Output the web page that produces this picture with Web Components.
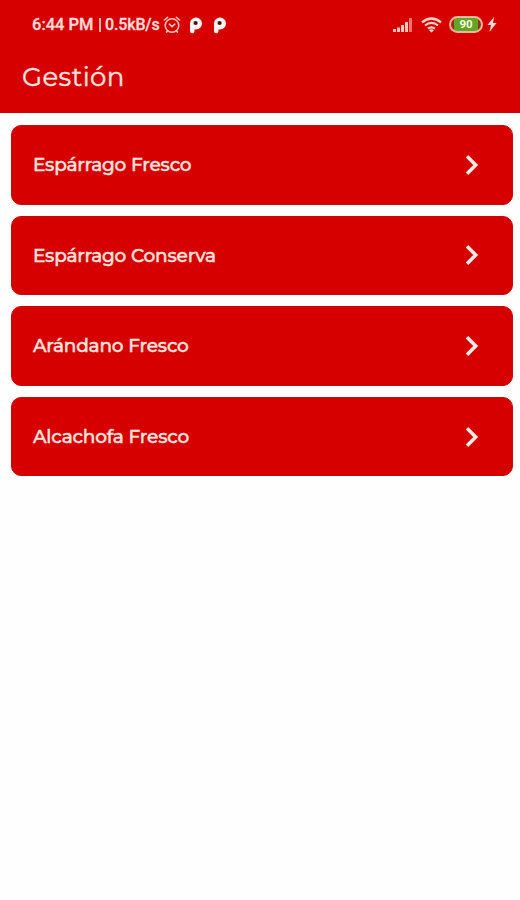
<!DOCTYPE html>
<html lang="es">
<head>
<meta charset="utf-8">
<title>Gestión</title>
<style>
  body {
    margin: 0;
    background: #fefefe;
    font-family: Montserrat, Inter, sans-serif;
  }
</style>
</head>
<body>
<app-screen>
  <status-bar slot="top" time="6:44 PM" speed="0.5kB/s" battery="90"></status-bar>
  <app-header slot="top">Gestión</app-header>
  <menu-item>Espárrago Fresco</menu-item>
  <menu-item>Espárrago Conserva</menu-item>
  <menu-item>Arándano Fresco</menu-item>
  <menu-item>Alcachofa Fresco</menu-item>
</app-screen>

<script>
class AppScreen extends HTMLElement {
  constructor() {
    super();

    this._shadowRoot = this.attachShadow({ mode: 'open' });
    this._shadowRoot.innerHTML = `
      <style>
        :host {
          display: block;
          min-height: 900px;
        }

        header {
          height: 113px;
          background: #d60000;
          color: #ffe3df;
        }

        main {
          display: grid;
          grid-auto-rows: 79.6px;
          gap: 11px;
          padding: 12px 7px 12px 11px;
        }
      </style>
      <header><slot name="top"></slot></header>
      <main><slot></slot></main>
    `;
  }
}

class StatusBar extends HTMLElement {
  constructor() {
    super();

    this._shadowRoot = this.attachShadow({ mode: 'open' });
    this._shadowRoot.innerHTML = `
      <style>
        :host {
          display: flex;
          align-items: center;
          justify-content: space-between;
          box-sizing: border-box;
          height: 48px;
          padding: 1px 23px 0 32px;
          font: 500 16.5px/20px Roboto, sans-serif;
          color: #ffdcd7;
        }

        div {
          display: flex;
          align-items: center;
        }

        svg {
          display: block;
          flex: none;
        }

        span {
          padding-top: 1px;
          -webkit-text-stroke: 0.3px;
        }

        #time {
          width: 66px;
          white-space: nowrap;
        }

        #speed {
          width: 58px;
          font-size: 16px;
          letter-spacing: -0.15px;
          white-space: nowrap;
        }

        .bar {
          width: 1.5px;
          height: 14px;
          margin: 0 4.5px 0 1px;
          padding: 0;
          background: #ffb5ad;
        }

        .alarm {
          margin-right: 8px;
        }

        .app + .app {
          margin-left: 10px;
        }

        .signal {
          margin-right: 8px;
        }

        .wifi {
          margin-right: 7px;
        }

        #battery {
          box-sizing: border-box;
          justify-content: center;
          width: 34px;
          height: 17px;
          margin-right: 4px;
          border: 2px solid #f5b49b;
          border-radius: 9px;
          background: linear-gradient(90deg, #a32a10 3px, #62a525 3px 27px, #8c3413 27px);
          color: #f5ffe5;
          font-size: 11.5px;
          font-weight: 700;
          line-height: 13px;
        }
      </style>
      <div>
        <span id="time"></span>
        <span class="bar"></span>
        <span id="speed"></span>
        <svg class="alarm" width="18" height="20" viewBox="0 0 18 20" fill="none" stroke="#ffc2ba" stroke-width="1.6" stroke-linecap="round">
          <circle cx="9" cy="10.5" r="6.8"/>
          <path d="M1.4 5 4.6 2.4M16.6 5l-3.2-2.6M4.2 16.2l-.7 1M13.8 16.2l.7 1M6.4 9.2 9 11.6l2.8-2.4"/>
        </svg>
        <svg class="app" width="14" height="18" viewBox="0 0 14 18">
          <path d="M1 7.5A6 6 0 1 1 7 13.5L5.5 13.3V15a2 2 0 0 1-4.5 0Z" fill="#fff3f0"/>
          <circle cx="6.6" cy="7" r="2.1" fill="#431219"/>
        </svg>
        <svg class="app" width="14" height="18" viewBox="0 0 14 18">
          <path d="M1 7.5A6 6 0 1 1 7 13.5L5.5 13.3V15a2 2 0 0 1-4.5 0Z" fill="#fff3f0"/>
          <circle cx="6.6" cy="7" r="2.1" fill="#431219"/>
        </svg>
      </div>
      <div>
        <svg class="signal" width="20" height="16" viewBox="0 0 20 16" fill="#ffc5bf">
          <path d="M0 12h3v3H0zM4 10.5h3V15H4zM8 8h3v7H8zM12 5h3v10h-3z"/>
          <path d="M16 1h3v14h-3z" fill="#ef766f"/>
        </svg>
        <svg class="wifi" width="21" height="16" viewBox="0 0 21 16" fill="none" stroke="#ffd3ca" stroke-width="2.2">
          <path d="M1 5.3Q10.5-2.3 20 5.3M4 8.5q6.5-5.2 13 0M7 11.7q3.5-2.7 7 0"/>
          <path d="m8 13.2 2.5 2.3 2.5-2.3q-2.5-1.8-5 0Z" fill="#ffd3ca" stroke="none"/>
        </svg>
        <div id="battery"></div>
        <svg width="10" height="15" viewBox="0 0 10 15" fill="#ffd9d3">
          <path d="M7 0 .5 8H4L2.5 15 9.5 6H6Z"/>
        </svg>
      </div>
    `;
  }

  connectedCallback() {
    ['time', 'speed', 'battery'].forEach((name) => {
      this._shadowRoot.getElementById(name).textContent = this.getAttribute(name);
    });
  }
}

class AppHeader extends HTMLElement {
  constructor() {
    super();

    this._shadowRoot = this.attachShadow({ mode: 'open' });
    this._shadowRoot.innerHTML = `
      <style>
        :host {
          display: flex;
          align-items: center;
          height: 58px;
          padding-left: 22px;
        }

        h1 {
          margin: 0;
          font-size: 26px;
          font-weight: 400;
          letter-spacing: 0.4px;
          -webkit-text-stroke: 0.4px;
        }
      </style>
      <h1><slot></slot></h1>
    `;
  }
}

class MenuItem extends HTMLElement {
  constructor() {
    super();

    this._shadowRoot = this.attachShadow({ mode: 'open' });
    this._shadowRoot.innerHTML = `
      <style>
        :host {
          display: flex;
          align-items: center;
          justify-content: space-between;
          box-sizing: border-box;
          padding: 0 33px 0 21px;
          border: 1px solid #c90808;
          border-radius: 10px;
          background: #d60000;
          color: #ffe3df;
          font-size: 18.5px;
          font-weight: 500;
          letter-spacing: -0.2px;
          -webkit-text-stroke: 0.4px;
          cursor: pointer;
        }
      </style>
      <span><slot></slot></span>
      <svg width="14" height="22" viewBox="0 0 14 22" fill="none" stroke="#ffeae4" stroke-width="3.5">
        <path d="m2 2.3 8.7 8.7L2 19.7"/>
      </svg>
    `;
  }
}

customElements.define('app-screen', AppScreen);
customElements.define('status-bar', StatusBar);
customElements.define('app-header', AppHeader);
customElements.define('menu-item', MenuItem);
</script>
</body>
</html>
